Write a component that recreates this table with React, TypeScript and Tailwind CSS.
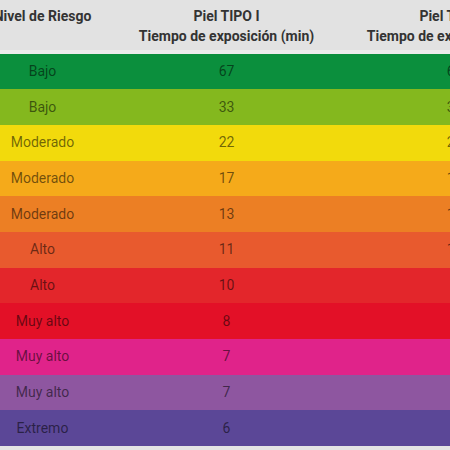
import React from "react";

const rows: { level: string; bg: string; t1: string; t2: string }[] = [
  { level: "Bajo", bg: "bg-[#0b8f3d]", t1: "67", t2: "67" },
  { level: "Bajo", bg: "bg-[#84b81e]", t1: "33", t2: "33" },
  { level: "Moderado", bg: "bg-[#f2da0c]", t1: "22", t2: "22" },
  { level: "Moderado", bg: "bg-[#f5aa1a]", t1: "17", t2: "17" },
  { level: "Moderado", bg: "bg-[#ec7f24]", t1: "13", t2: "13" },
  { level: "Alto", bg: "bg-[#e85a2e]", t1: "11", t2: "11" },
  { level: "Alto", bg: "bg-[#e3262b]", t1: "10", t2: "9" },
  { level: "Muy alto", bg: "bg-[#e31027]", t1: "8", t2: "8" },
  { level: "Muy alto", bg: "bg-[#e0238a]", t1: "7", t2: "7" },
  { level: "Muy alto", bg: "bg-[#8e56a0]", t1: "7", t2: "7" },
  { level: "Extremo", bg: "bg-[#5b4797]", t1: "6", t2: "6" },
];

export default function App() {
  return (
    <div
      className="w-[450px] h-[450px] overflow-hidden bg-[#e4e4e4]"
      style={{ fontFamily: "Roboto, 'Liberation Sans', sans-serif" }}
    >
      <div className="ml-[-26px] w-[600px]">
        <div className="grid grid-cols-[137px_231px_225px] h-[50px] bg-[#e2e2e2] text-[14px] font-bold text-[#333] leading-[20px]">
          <div className="flex items-start justify-center pt-[6px]">Nivel de Riesgo</div>
          <div className="flex flex-col items-center pt-[6px]">
            <span>Piel TIPO I</span>
            <span>Tiempo de exposición (min)</span>
          </div>
          <div className="flex flex-col items-center pt-[6px]">
            <span>Piel TIPO II</span>
            <span>Tiempo de exposición (min)</span>
          </div>
        </div>
        <div className="h-[3.5px] bg-[#ececec]" />
        {rows.map((r, i) => (
          <div
            key={i}
            className={`grid grid-cols-[137px_231px_225px] h-[35.7px] items-center text-[14px] text-black/55 ${r.bg}`}
          >
            <div className="text-center">{r.level}</div>
            <div className="text-center">{r.t1}</div>
            <div className="text-center">{r.t2}</div>
          </div>
        ))}
      </div>
    </div>
  );
}
